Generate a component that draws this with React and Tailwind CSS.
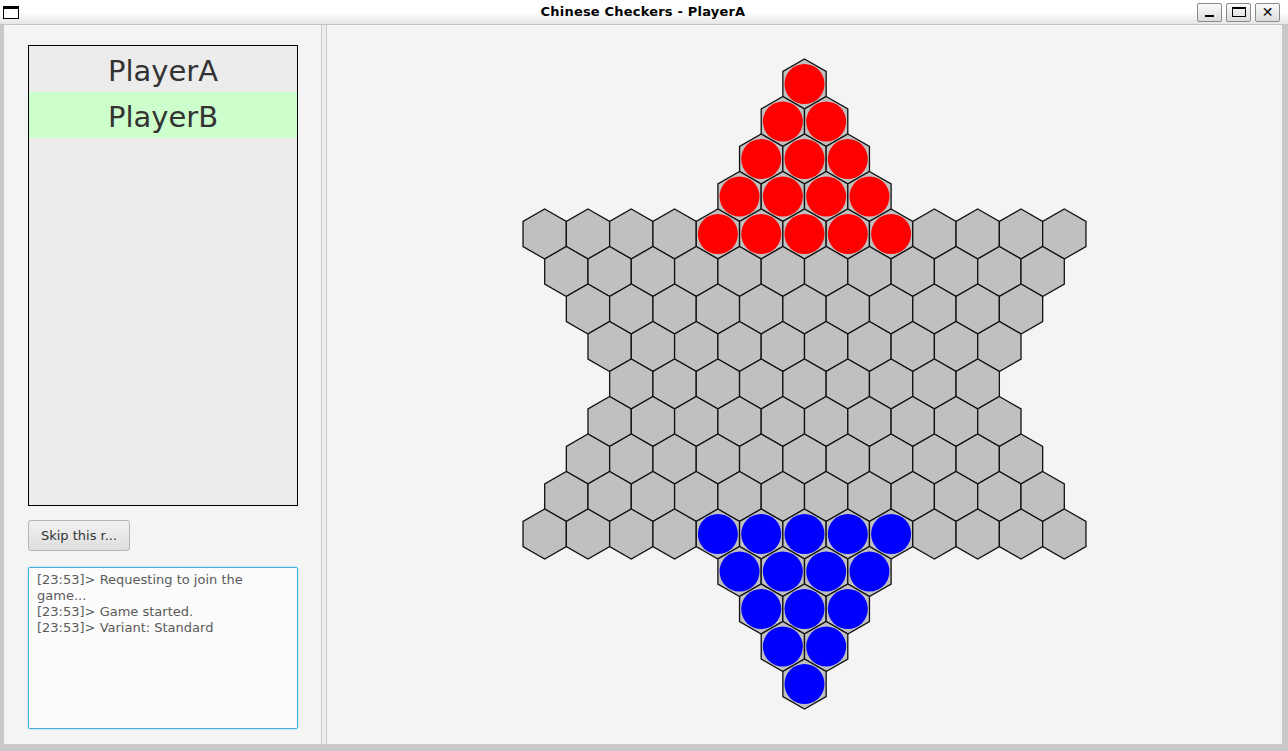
import React from 'react';

const S = 25;
const W = S * Math.sqrt(3);
const ROWS = [1, 2, 3, 4, 13, 12, 11, 10, 9, 10, 11, 12, 13, 4, 3, 2, 1];
const BOARD_W = 570;
const BOARD_H = 656;

function hexPoints(cx, cy) {
  const h = W / 2;
  return [
    [cx, cy - S],
    [cx + h, cy - S / 2],
    [cx + h, cy + S / 2],
    [cx, cy + S],
    [cx - h, cy + S / 2],
    [cx - h, cy - S / 2],
  ]
    .map(p => p.map(v => v.toFixed(2)).join(','))
    .join(' ');
}

function pieceColor(r, i) {
  if (r < 4) return '#ff0000';
  if (r === 4 && i >= 4 && i <= 8) return '#ff0000';
  if (r > 12) return '#0000ff';
  if (r === 12 && i >= 4 && i <= 8) return '#0000ff';
  return null;
}

function Board() {
  const cells = [];
  ROWS.forEach((n, r) => {
    const cy = BOARD_H / 2 - 1 + (r - 8) * 1.5 * S;
    for (let i = 0; i < n; i++) {
      const cx = BOARD_W / 2 - 0.5 + (i - (n - 1) / 2) * W;
      cells.push({ key: `${r}-${i}`, cx, cy, color: pieceColor(r, i) });
    }
  });
  return (
    <svg width={BOARD_W} height={BOARD_H} viewBox={`0 0 ${BOARD_W} ${BOARD_H}`}>
      {cells.map(c => (
        <polygon key={c.key} points={hexPoints(c.cx, c.cy)} fill="#c0c0c0" stroke="#111" strokeWidth="1.3" />
      ))}
      {cells.filter(c => c.color).map(c => (
        <circle key={'p' + c.key} cx={c.cx} cy={c.cy} r="20" fill={c.color} />
      ))}
    </svg>
  );
}

function TitleButton({ children }) {
  return (
    <div className="w-[25px] h-[19px] border border-[#8a8a8a] rounded-[2px] bg-gradient-to-b from-[#fafafa] to-[#dcdcdc] flex items-center justify-center">
      {children}
    </div>
  );
}

export default function App() {
  return (
    <div className="w-[1288px] h-[751px] flex flex-col bg-[#c8c8c8] overflow-hidden" style={{ fontFamily: '"DejaVu Sans", sans-serif' }}>
      {/* Title bar */}
      <div className="h-[25px] shrink-0 grid grid-cols-[1fr_auto_1fr] items-center bg-gradient-to-b from-white via-white to-[#e6e6e6] border-b border-[#c4c4c4]">
        <div className="ml-[3px] w-[16px] h-[13px] border border-black border-t-[3px] bg-white" />
        <div className="text-[13px] font-bold text-black tracking-[0.2px] pr-[2px]">Chinese Checkers - PlayerA</div>
        <div className="flex gap-[4px] mr-[8px] justify-self-end">
          <TitleButton>
            <div className="w-[9px] h-[2px] bg-black mt-[8px]" />
          </TitleButton>
          <TitleButton>
            <div className="w-[14px] h-[10px] border border-black border-t-2" />
          </TitleButton>
          <TitleButton>
            <span className="text-[14px] font-bold leading-none text-black">✕</span>
          </TitleButton>
        </div>
      </div>

      {/* Window content */}
      <div className="flex-1 flex pl-[4px] pr-[6px] pb-[7px] min-h-0">
        {/* Left pane */}
        <div className="w-[317px] shrink-0 bg-[#f4f4f4] flex flex-col pl-[24px] pt-[20px]">
          <div className="w-[270px] h-[461px] border border-black bg-[#ececec] flex flex-col">
            <div className="h-[46px] flex items-center justify-center pt-[5px] text-[29px] text-[#333]">PlayerA</div>
            <div className="h-[46px] flex items-center justify-center pt-[5px] text-[29px] text-[#333] bg-[#ccffcc]">PlayerB</div>
          </div>
          <div className="mt-[14px] w-[102px] h-[31px] rounded-[3px] border border-[#b4b4b4] bg-gradient-to-b from-[#f2f2f2] to-[#dedede] flex items-center justify-center pt-[1px] text-[13px] text-[#333]">
            Skip this r...
          </div>
          <div className="mt-[16px] w-[270px] h-[162px] rounded-[2px] border border-[#45aee0] bg-[#fcfcfc] shadow-[0_0_2px_#8fd0ef] px-[8px] pt-[4px] text-[13px] leading-[16px] text-[#5a5a5a]">
            <div>[23:53]&gt; Requesting to join the</div>
            <div>game...</div>
            <div>[23:53]&gt; Game started.</div>
            <div>[23:53]&gt; Variant: Standard</div>
          </div>
        </div>

        {/* Split divider */}
        <div className="w-[6px] shrink-0 flex">
          <div className="w-px bg-[#c9c9c9]" />
          <div className="flex-1 bg-[#ececec]" />
          <div className="w-px bg-[#c9c9c9]" />
        </div>

        {/* Board pane */}
        <div className="flex-1 bg-[#f4f4f4] flex items-center justify-center">
          <Board />
        </div>
      </div>
    </div>
  );
}
